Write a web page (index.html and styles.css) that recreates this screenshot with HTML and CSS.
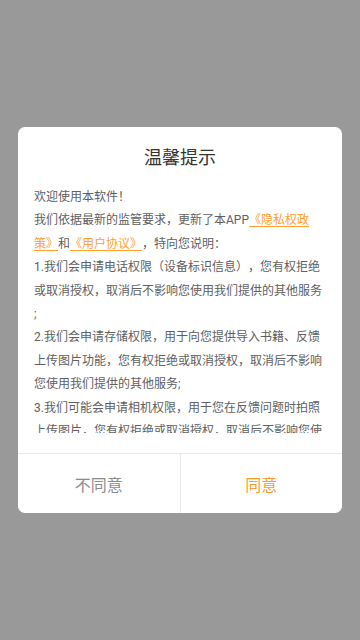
FILE: index.html
```html
<!DOCTYPE html>
<html>
<head>
  <meta charset="utf-8">
  <title>温馨提示</title>
  <link rel="stylesheet" href="styles.css">
</head>
<body>
  <div class="dialog">
    <h1 class="dialog-title">温馨提示</h1>

    <div class="dialog-body">
      <p>欢迎使用本软件！</p>
      <p>我们依据最新的监管要求，更新了本APP<a href="#" class="link">《隐私权政策》</a>和<a href="#" class="link">《用户协议》</a>，特向您说明：</p>
      <p>1.我们会申请电话权限（设备标识信息），您有权拒绝或取消授权，取消后不影响您使用我们提供的其他服务<br>;</p>
      <p>2.我们会申请存储权限，用于向您提供导入书籍、反馈上传图片功能，您有权拒绝或取消授权，取消后不影响您使用我们提供的其他服务;</p>
      <p>3.我们可能会申请相机权限，用于您在反馈问题时拍照上传图片，您有权拒绝或取消授权，取消后不影响您使用我们提供的其他服务;</p>
    </div>

    <div class="dialog-actions">
      <button class="action">不同意</button>
      <button class="action primary">同意</button>
    </div>
  </div>
</body>
</html>
```

FILE: styles.css
```css
* {
  box-sizing: border-box;
}

html,
body {
  height: 100%;
}

body {
  margin: 0;
  background: #999999;
  font-family: Roboto, "Noto Sans CJK SC", sans-serif;
  text-spacing-trim: space-all;
  display: flex;
  align-items: center;
  justify-content: center;
}

.dialog {
  width: 324px;
  background: #ffffff;
  border-radius: 7px;
  overflow: hidden;
}

.dialog-title {
  margin: 0;
  padding-top: 18px;
  font-size: 18px;
  font-weight: 400;
  line-height: 26px;
  text-align: center;
  color: #333333;
}

.dialog-body {
  margin: 15px 0 20px 0;
  padding: 0 18px 0 16px;
  height: 247px;
  overflow: hidden;
  font-size: 12px;
  line-height: 23.4px;
  color: #606060;
}

.dialog-body p {
  margin: 0;
}

.link {
  color: #ff9f30;
  text-decoration: underline;
  text-decoration-thickness: 1px;
  text-underline-offset: 2px;
}

.dialog-actions {
  display: flex;
  height: 60px;
  border-top: 1px solid #e8e8e8;
}

.action {
  flex: 1;
  border: none;
  background: none;
  margin: 0;
  padding: 0;
  font-family: inherit;
  font-size: 16px;
  color: #8c8c8c;
  cursor: pointer;
}

.action + .action {
  border-left: 1px solid #e8e8e8;
}

.action.primary {
  color: #ff9a26;
}
```
